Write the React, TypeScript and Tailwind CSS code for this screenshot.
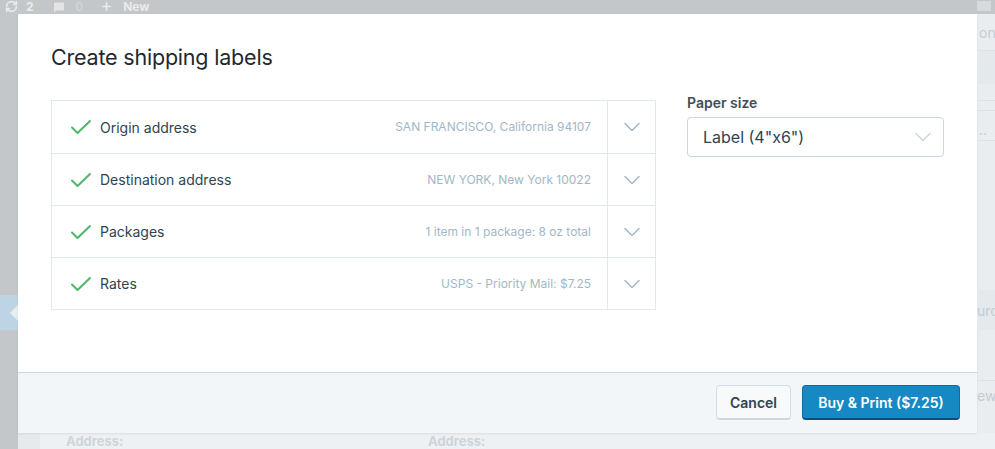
import { RefreshCw, MessageSquare, Plus } from 'lucide-react';

const font = { fontFamily: 'Inter, "Noto Sans", sans-serif' };

const steps = [
  { label: 'Origin address', summary: 'SAN FRANCISCO, California 94107' },
  { label: 'Destination address', summary: 'NEW YORK, New York 10022' },
  { label: 'Packages', summary: '1 item in 1 package: 8 oz total' },
  { label: 'Rates', summary: 'USPS - Priority Mail: $7.25' },
];

const Check = () => (
  <svg width="22" height="16" viewBox="0 0 22 16" fill="none">
    <path d="M2 8.5 L7.5 14 L20 2" stroke="#4ab866" strokeWidth="2" strokeLinecap="round" strokeLinejoin="round" />
  </svg>
);

const Chevron = ({ color = '#a2b9c9' }: { color?: string }) => (
  <svg width="16" height="10" viewBox="0 0 16 10" fill="none">
    <path d="M1 1.5 L8 8.5 L15 1.5" stroke={color} strokeWidth="1.5" strokeLinecap="round" strokeLinejoin="round" />
  </svg>
);

const App = () => {
  return (
    <div className="relative w-[995px] h-[449px] overflow-hidden bg-[#e9edf0]" style={font}>
      {/* Dimmed admin bar */}
      <div className="h-[14px] bg-[#c4c7ca] overflow-hidden">
        <div className="flex items-center h-[13px] pl-[5px] text-[#e9ebec] text-[12px] leading-[13px] font-bold">
          <RefreshCw size={13} strokeWidth={3} />
          <span className="ml-[8px]">2</span>
          <MessageSquare size={12} strokeWidth={0} fill="#e2e4e6" className="ml-[19px]" />
          <span className="ml-[11px] font-normal text-[#d5d8da]">0</span>
          <Plus size={13} strokeWidth={3} className="ml-[17px]" />
          <span className="ml-[10px]">New</span>
        </div>
      </div>

      {/* Dimmed page behind */}
      <div className="flex h-[435px]">
        <div className="w-[18px] bg-[#c4c7ca] flex flex-col">
          <div className="mt-[281px] h-[35px] bg-[#bcd4e3] flex items-center justify-end">
            <div className="w-0 h-0 border-y-[8px] border-y-transparent border-r-[8px] border-r-[#e9edf0]" />
          </div>
        </div>
        <div className="flex-1 flex flex-col">
          <div className="flex-1" />
          <div className="h-[16px] flex text-[13px] leading-[15px] font-bold text-[#cdd5db]">
            <div className="w-[22px] bg-[#e6eaed]" />
            <div className="flex-1 bg-[#edf1f4] flex items-end pl-[26px]">
              <span className="w-[362px]">Address:</span>
              <span>Address:</span>
            </div>
          </div>
        </div>
      </div>

      {/* Modal */}
      <div className="absolute left-[18px] top-[14px] w-[959px] h-[419px] bg-white flex flex-col shadow-[0_1px_2px_rgba(0,0,0,0.08)]">
        <div className="flex-1 px-[33px] pt-[28px]">
          <h1 className="text-[21.5px] leading-[30px] text-[#23282d] tracking-[-0.2px]">Create shipping labels</h1>
          <div className="mt-[28px] flex gap-[31px]">
            <div className="w-[605px] border border-[#e1e8ee]">
              {steps.map((s, i) => (
                <div key={s.label} className={`flex h-[52px] ${i > 0 ? 'border-t border-[#e1e8ee]' : ''}`}>
                  <div className="flex-1 flex items-center pl-[18px] pr-[16px]">
                    <Check />
                    <span className="ml-[8px] text-[14px] text-[#2e4453]">{s.label}</span>
                    <span className="ml-auto text-[12px] text-[#a2b7c6]">{s.summary}</span>
                  </div>
                  <div className="w-[48px] border-l border-[#e1e8ee] flex items-center justify-center">
                    <Chevron />
                  </div>
                </div>
              ))}
            </div>
            <div className="flex-1">
              <div className="text-[14px] font-semibold text-[#3d4e5c] leading-[18px] -mt-[6px]">Paper size</div>
              <div className="mt-[5px] h-[40px] border border-[#c8d7e1] rounded-[4px] flex items-center pl-[15px] pr-[12px]">
                <span className="text-[16px] text-[#2e4453]">Label (4"x6")</span>
                <span className="ml-auto">
                  <Chevron color="#c8d7e1" />
                </span>
              </div>
            </div>
          </div>
        </div>
        <div className="h-[61px] bg-[#f3f6f8] border-t border-[#c8d7e1] flex items-center justify-end gap-[11px] pr-[17px] pb-[1px]">
          <button className="h-[35px] w-[75px] bg-[#f7f9fa] border border-[#d4dee6] border-b-2 border-b-[#c8d7e1] rounded-[4px] text-[14px] font-semibold text-[#2e4453]">
            Cancel
          </button>
          <button className="h-[35px] w-[158px] bg-[#1689c4] border border-[#0a6ea1] border-b-2 border-b-[#005082] rounded-[4px] text-[14px] font-semibold text-white">
            Buy &amp; Print ($7.25)
          </button>
        </div>
      </div>

      {/* Dimmed right strip content */}
      <div className="absolute left-[977px] top-[14px] w-[18px] h-[419px] flex flex-col text-[14px] text-[#c3ccd3] overflow-hidden">
        <div className="h-[36px] flex items-center pl-[2px]">on</div>
        <div className="h-[34px] bg-[#e4e9ed] border-t border-[#dbe1e6]" />
        <div className="h-[16px]" />
        <div className="h-[10px] border-t border-[#dbe1e6]" />
        <div className="h-[30px] border-t border-[#dbe1e6] flex items-end pl-[2px]">..</div>
        <div className="h-[150px] border-t border-[#dbe1e6]" />
        <div className="h-[40px] bg-[#e4e9ed] flex items-center whitespace-nowrap">urch</div>
        <div className="h-[50px]" />
        <div className="h-[30px] border-t border-[#dbe1e6] flex items-center">ew</div>
      </div>
      <div className="absolute left-[975px] top-[0px] w-[20px] h-[14px] overflow-hidden">
        <div className="ml-[2px] mt-[1px] w-[14px] h-[10px] bg-[#d7dadc] rounded-[1px]" />
      </div>
    </div>
  );
};

export default App;
